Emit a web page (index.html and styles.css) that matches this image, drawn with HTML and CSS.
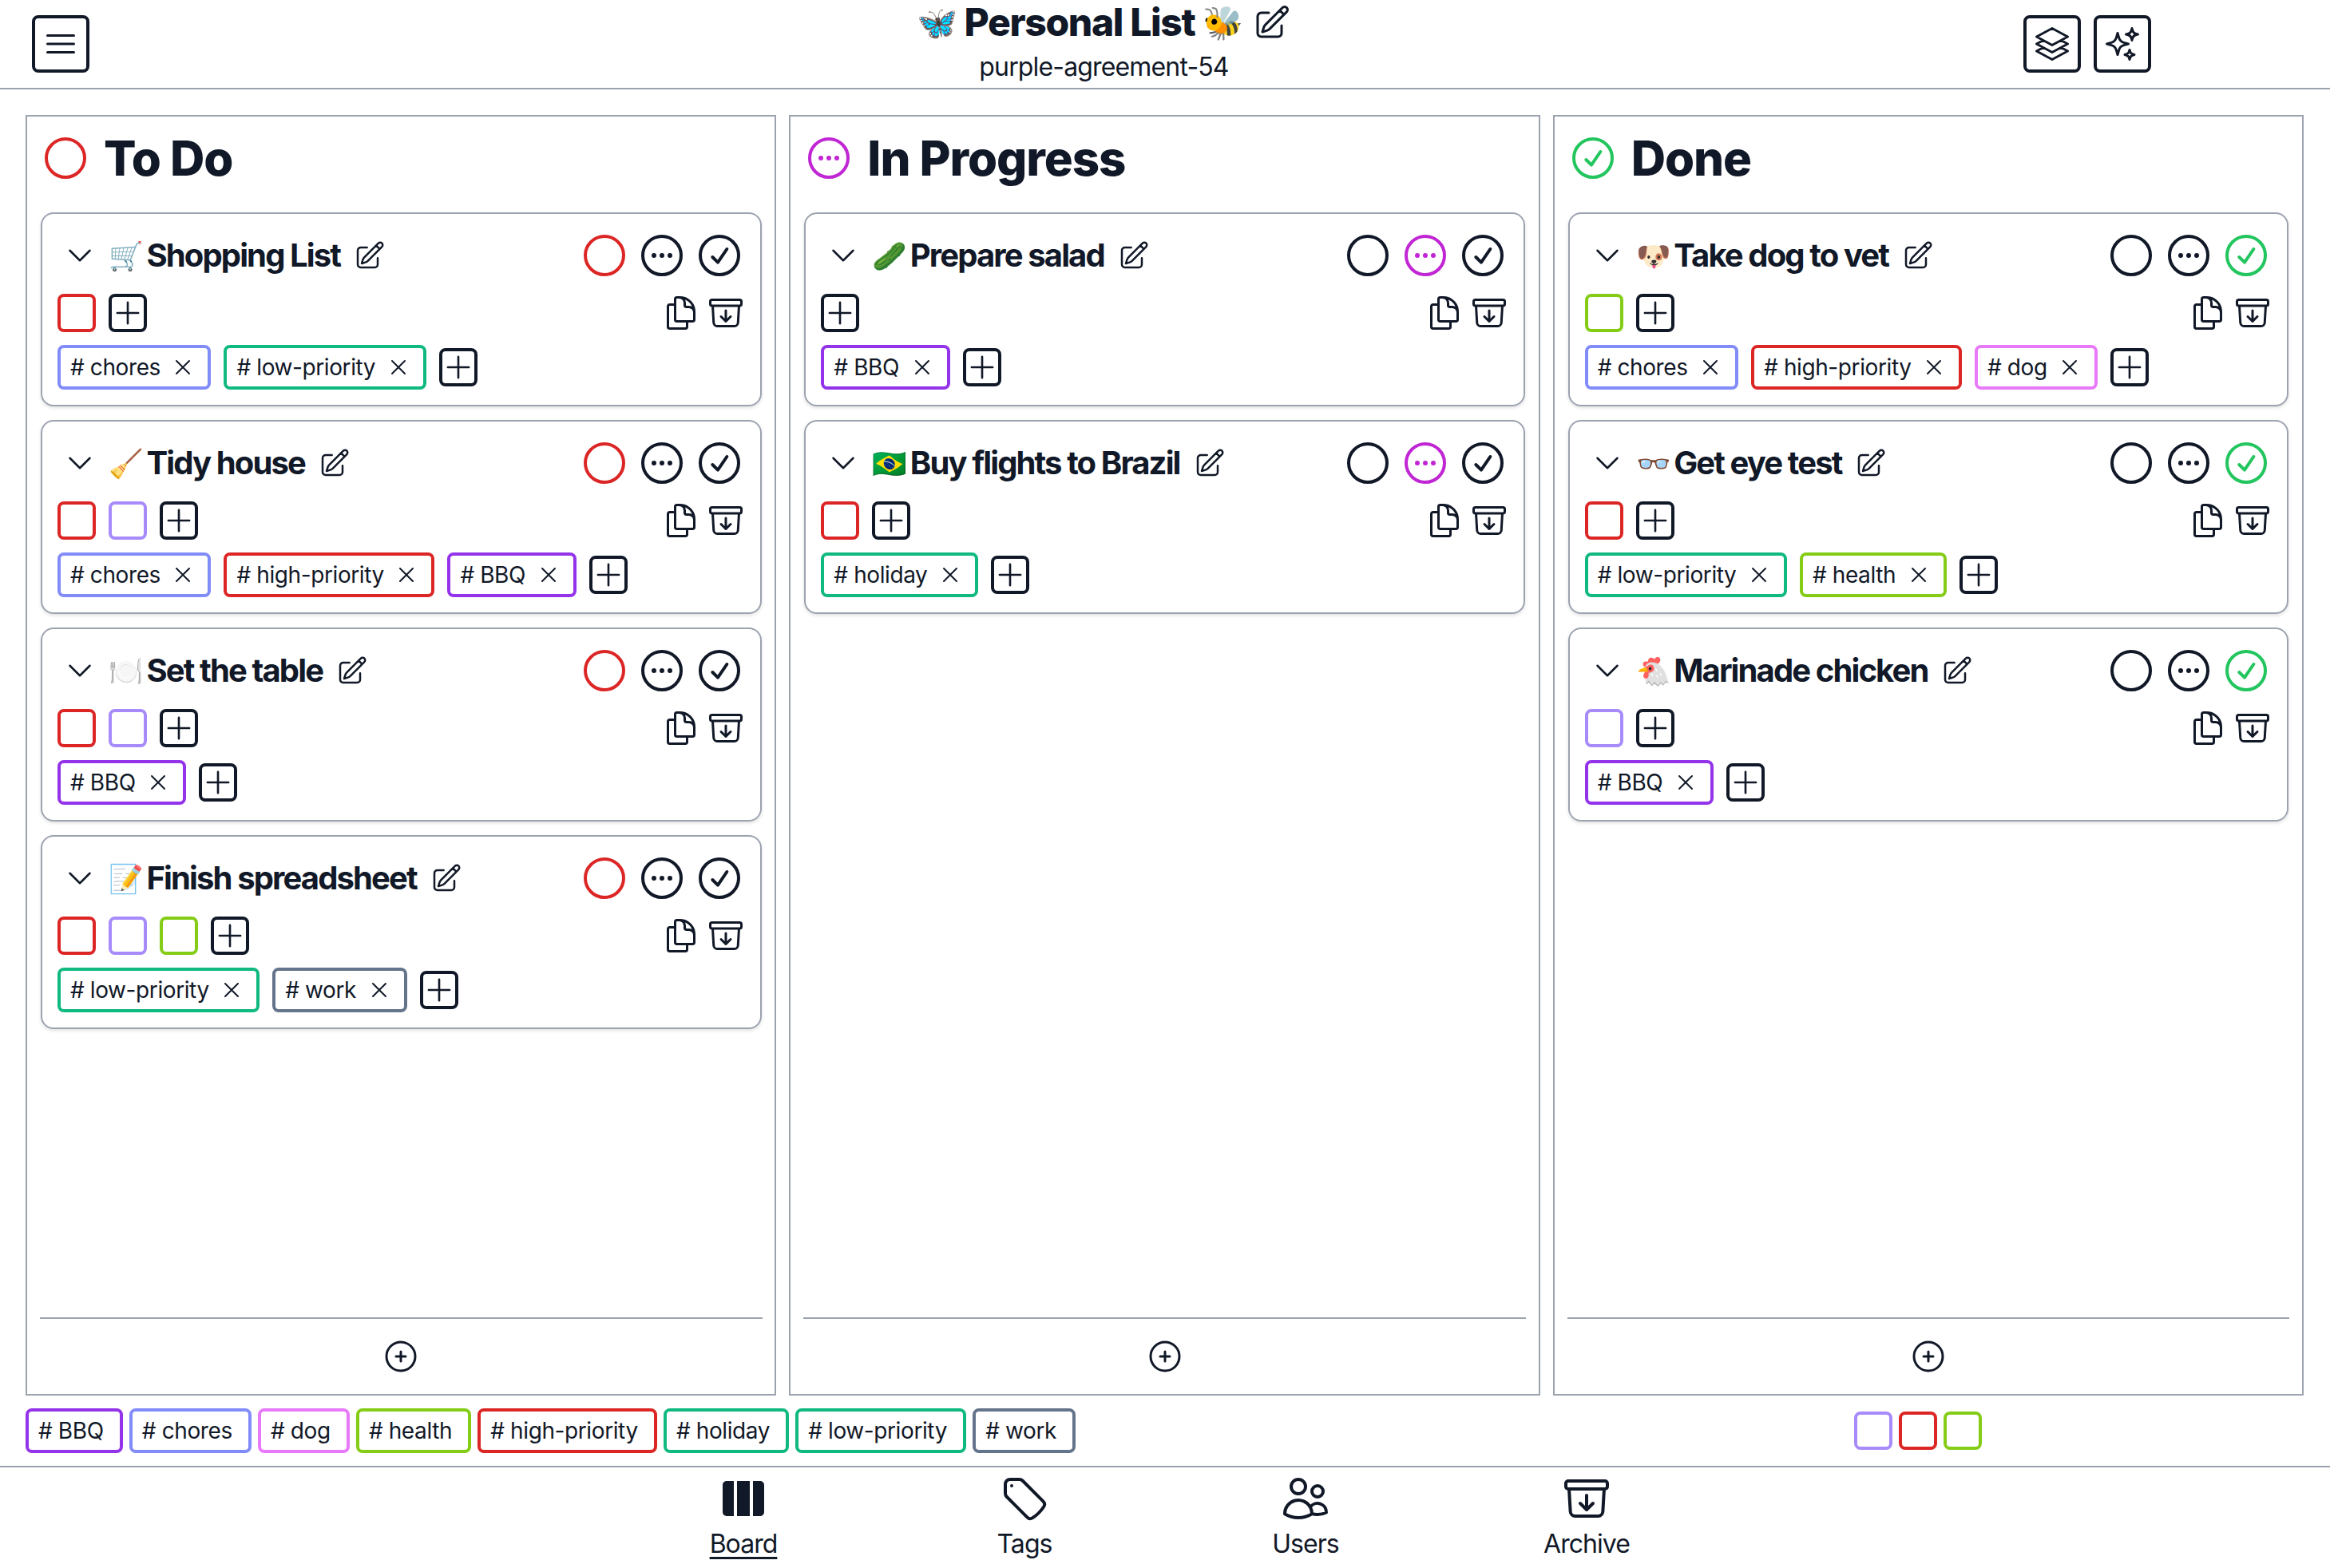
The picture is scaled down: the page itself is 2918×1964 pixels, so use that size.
FILE: index.html
```
<!DOCTYPE html>
<html lang="en"><head><meta charset="utf-8"><title>Personal List</title><link rel="stylesheet" href="styles.css"></head><body>
<svg class="sprite" xmlns="http://www.w3.org/2000/svg">
<symbol id="i-bars" viewBox="0 0 24 24"><path d="M3.75 6.75h16.5M3.75 12h16.5m-16.5 5.25h16.5"/></symbol>
<symbol id="i-pencil" viewBox="0 0 24 24"><path d="m16.862 4.487 1.687-1.688a1.875 1.875 0 1 1 2.652 2.652L10.582 16.07a4.5 4.5 0 0 1-1.897 1.13L6 18l.8-2.685a4.5 4.5 0 0 1 1.13-1.897l8.932-8.931Zm0 0L19.5 7.125M18 14v4.75A2.25 2.25 0 0 1 15.75 21H5.25A2.25 2.25 0 0 1 3 18.75V8.25A2.25 2.25 0 0 1 5.25 6H10"/></symbol>
<symbol id="i-stack" viewBox="0 0 24 24"><path d="M6.429 9.75 2.25 12l4.179 2.25m0-4.5 5.571 3 5.571-3m-11.142 0L2.25 7.5 12 2.25l9.75 5.25-4.179 2.25m0 0L21.75 12l-4.179 2.25m0 0 4.179 2.25L12 21.75 2.25 16.5l4.179-2.25m11.142 0-5.571 3-5.571-3"/></symbol>
<symbol id="i-sparkles" viewBox="0 0 24 24"><path d="M9.813 15.904 9 18.75l-.813-2.846a4.5 4.5 0 0 0-3.09-3.09L2.25 12l2.846-.813a4.5 4.5 0 0 0 3.09-3.09L9 5.25l.813 2.846a4.5 4.5 0 0 0 3.09 3.09L15.75 12l-2.846.813a4.5 4.5 0 0 0-3.09 3.09ZM18.259 8.715 18 9.75l-.259-1.035a3.375 3.375 0 0 0-2.455-2.456L14.25 6l1.036-.259a3.375 3.375 0 0 0 2.455-2.456L18 2.25l.259 1.035a3.375 3.375 0 0 0 2.456 2.456L21.75 6l-1.035.259a3.375 3.375 0 0 0-2.456 2.456ZM16.894 20.567 16.5 21.75l-.394-1.183a2.25 2.25 0 0 0-1.423-1.423L13.5 18.75l1.183-.394a2.25 2.25 0 0 0 1.423-1.423l.394-1.183.394 1.183a2.25 2.25 0 0 0 1.423 1.423l1.183.394-1.183.394a2.25 2.25 0 0 0-1.423 1.423Z"/></symbol>
<symbol id="i-circle" viewBox="0 0 24 24"><path d="M21 12a9 9 0 1 1-18 0 9 9 0 0 1 18 0Z"/></symbol>
<symbol id="i-dots" viewBox="0 0 24 24"><path d="M8.625 12a.375.375 0 1 1-.75 0 .375.375 0 0 1 .75 0Zm0 0H8.25m4.125 0a.375.375 0 1 1-.75 0 .375.375 0 0 1 .75 0Zm0 0H12m4.125 0a.375.375 0 1 1-.75 0 .375.375 0 0 1 .75 0Zm0 0h-.375M21 12a9 9 0 1 1-18 0 9 9 0 0 1 18 0Z"/></symbol>
<symbol id="i-check" viewBox="0 0 24 24"><path d="m8.75 12.75 2.5 2.5 4.25-6.25M21 12a9 9 0 1 1-18 0 9 9 0 0 1 18 0Z"/></symbol>
<symbol id="i-chevron" viewBox="0 0 24 24"><path d="m19.5 8.25-7.5 7.5-7.5-7.5"/></symbol>
<symbol id="i-plus" viewBox="0 0 24 24"><path d="M12 4.5v15m7.5-7.5h-15"/></symbol>
<symbol id="i-x" viewBox="0 0 24 24"><path d="M6 18 18 6M6 6l12 12"/></symbol>
<symbol id="i-copy" viewBox="0 0 24 24"><path d="M15.75 17.25v3.375c0 .621-.504 1.125-1.125 1.125h-9.75a1.125 1.125 0 0 1-1.125-1.125V7.875c0-.621.504-1.125 1.125-1.125H6.75a9.06 9.06 0 0 1 1.5.124m7.5 10.376h3.375c.621 0 1.125-.504 1.125-1.125V11.25c0-4.46-3.243-8.161-7.5-8.876a9.06 9.06 0 0 0-1.5-.124H9.375c-.621 0-1.125.504-1.125 1.125v3.5m7.5 10.375H9.375a1.125 1.125 0 0 1-1.125-1.125v-9.25m12 6.625v-1.875a3.375 3.375 0 0 0-3.375-3.375h-1.5a1.125 1.125 0 0 1-1.125-1.125v-1.5a3.375 3.375 0 0 0-3.375-3.375H9.75"/></symbol>
<symbol id="i-archive" viewBox="0 0 24 24"><path d="m20.25 7.5-.625 10.632a2.25 2.25 0 0 1-2.247 2.118H6.622a2.25 2.25 0 0 1-2.247-2.118L3.75 7.5m8.25 3v6.75m0 0-3-3m3 3 3-3M3.375 7.5h17.25c.621 0 1.125-.504 1.125-1.125v-1.5c0-.621-.504-1.125-1.125-1.125H3.375c-.621 0-1.125.504-1.125 1.125v1.5c0 .621.504 1.125 1.125 1.125Z"/></symbol>
<symbol id="i-plus-circle" viewBox="0 0 24 24"><path d="M12 9v6m3-3H9m12 0a9 9 0 1 1-18 0 9 9 0 0 1 18 0Z"/></symbol>
<symbol id="i-board" viewBox="0 0 24 24"><path class="solid" d="M15 3.75H9v16.5h6V3.75ZM16.5 20.25h3.375c1.035 0 1.875-.84 1.875-1.875V5.625c0-1.036-.84-1.875-1.875-1.875H16.5v16.5ZM4.125 3.75H7.5v16.5H4.125a1.875 1.875 0 0 1-1.875-1.875V5.625c0-1.036.84-1.875 1.875-1.875Z"/></symbol>
<symbol id="i-tag" viewBox="0 0 24 24"><path d="M9.568 3H5.25A2.25 2.25 0 0 0 3 5.25v4.318c0 .597.237 1.17.659 1.591l9.581 9.581c.699.699 1.78.872 2.607.33a18.095 18.095 0 0 0 5.223-5.223c.542-.827.369-1.908-.33-2.607L11.16 3.66A2.25 2.25 0 0 0 9.568 3Z"/><path d="M6 6h.008v.008H6V6Z"/></symbol>
<symbol id="i-users" viewBox="0 0 24 24"><path d="M15 19.128a9.38 9.38 0 0 0 2.625.372 9.337 9.337 0 0 0 4.121-.952 4.125 4.125 0 0 0-7.533-2.493M15 19.128v-.003c0-1.113-.285-2.16-.786-3.07M15 19.128v.106A12.318 12.318 0 0 1 8.624 21c-2.331 0-4.512-.645-6.374-1.766l-.001-.109a6.375 6.375 0 0 1 11.964-3.07M12 6.375a3.375 3.375 0 1 1-6.75 0 3.375 3.375 0 0 1 6.75 0Zm8.25 2.25a2.625 2.625 0 1 1-5.25 0 2.625 2.625 0 0 1 5.25 0Z"/></symbol>
</svg>

<header class="topbar">
  <button class="frame-btn"><svg class="ic48"><use href="#i-bars"/></svg></button>
  <div class="board-id">
    <div class="board-title"><span class="emoji-lg butterfly">🦋</span><h1>Personal List</h1><span class="emoji-lg">🐝</span><svg class="ic48 title-pencil"><use href="#i-pencil"/></svg></div>
    <div class="board-slug">purple-agreement-54</div>
  </div>
  <div class="top-actions">
    <button class="frame-btn"><svg class="ic48"><use href="#i-stack"/></svg></button>
    <button class="frame-btn"><svg class="ic48"><use href="#i-sparkles"/></svg></button>
  </div>
</header>

<main class="columns">
  <section class="column">
    <div class="column-head"><svg class="ic64 c-red"><use href="#i-circle"/></svg><h2>To Do</h2></div>
    <div class="cards">
      <article class="card">
        <div class="card-top"><svg class="ic40 chev"><use href="#i-chevron"/></svg><span class="emoji">🛒</span><h3>Shopping List</h3><svg class="ic40 pencil"><use href="#i-pencil"/></svg>
          <div class="states"><svg class="ic64 c-red"><use href="#i-circle"/></svg><svg class="ic64"><use href="#i-dots"/></svg><svg class="ic64"><use href="#i-check"/></svg></div></div>
        <div class="card-mid"><div class="swatches"><span class="swatch b-red"></span><span class="swatch add"><svg class="ic42"><use href="#i-plus"/></svg></span></div>
          <div class="tools"><svg class="ic48"><use href="#i-copy"/></svg><svg class="ic48"><use href="#i-archive"/></svg></div></div>
        <div class="tags"><span class="tag b-indigo"># chores<svg class="ic32"><use href="#i-x"/></svg></span><span class="tag b-emerald"># low-priority<svg class="ic32"><use href="#i-x"/></svg></span><span class="swatch add"><svg class="ic42"><use href="#i-plus"/></svg></span></div>
      </article>
      <article class="card">
        <div class="card-top"><svg class="ic40 chev"><use href="#i-chevron"/></svg><span class="emoji">🧹</span><h3>Tidy house</h3><svg class="ic40 pencil"><use href="#i-pencil"/></svg>
          <div class="states"><svg class="ic64 c-red"><use href="#i-circle"/></svg><svg class="ic64"><use href="#i-dots"/></svg><svg class="ic64"><use href="#i-check"/></svg></div></div>
        <div class="card-mid"><div class="swatches"><span class="swatch b-red"></span><span class="swatch b-violet"></span><span class="swatch add"><svg class="ic42"><use href="#i-plus"/></svg></span></div>
          <div class="tools"><svg class="ic48"><use href="#i-copy"/></svg><svg class="ic48"><use href="#i-archive"/></svg></div></div>
        <div class="tags"><span class="tag b-indigo"># chores<svg class="ic32"><use href="#i-x"/></svg></span><span class="tag b-red"># high-priority<svg class="ic32"><use href="#i-x"/></svg></span><span class="tag b-purple"># BBQ<svg class="ic32"><use href="#i-x"/></svg></span><span class="swatch add"><svg class="ic42"><use href="#i-plus"/></svg></span></div>
      </article>
      <article class="card">
        <div class="card-top"><svg class="ic40 chev"><use href="#i-chevron"/></svg><span class="emoji">🍽️</span><h3>Set the table</h3><svg class="ic40 pencil"><use href="#i-pencil"/></svg>
          <div class="states"><svg class="ic64 c-red"><use href="#i-circle"/></svg><svg class="ic64"><use href="#i-dots"/></svg><svg class="ic64"><use href="#i-check"/></svg></div></div>
        <div class="card-mid"><div class="swatches"><span class="swatch b-red"></span><span class="swatch b-violet"></span><span class="swatch add"><svg class="ic42"><use href="#i-plus"/></svg></span></div>
          <div class="tools"><svg class="ic48"><use href="#i-copy"/></svg><svg class="ic48"><use href="#i-archive"/></svg></div></div>
        <div class="tags"><span class="tag b-purple"># BBQ<svg class="ic32"><use href="#i-x"/></svg></span><span class="swatch add"><svg class="ic42"><use href="#i-plus"/></svg></span></div>
      </article>
      <article class="card">
        <div class="card-top"><svg class="ic40 chev"><use href="#i-chevron"/></svg><span class="emoji">📝</span><h3>Finish spreadsheet</h3><svg class="ic40 pencil"><use href="#i-pencil"/></svg>
          <div class="states"><svg class="ic64 c-red"><use href="#i-circle"/></svg><svg class="ic64"><use href="#i-dots"/></svg><svg class="ic64"><use href="#i-check"/></svg></div></div>
        <div class="card-mid"><div class="swatches"><span class="swatch b-red"></span><span class="swatch b-violet"></span><span class="swatch b-lime"></span><span class="swatch add"><svg class="ic42"><use href="#i-plus"/></svg></span></div>
          <div class="tools"><svg class="ic48"><use href="#i-copy"/></svg><svg class="ic48"><use href="#i-archive"/></svg></div></div>
        <div class="tags"><span class="tag b-emerald"># low-priority<svg class="ic32"><use href="#i-x"/></svg></span><span class="tag b-slate"># work<svg class="ic32"><use href="#i-x"/></svg></span><span class="swatch add"><svg class="ic42"><use href="#i-plus"/></svg></span></div>
      </article>
    </div>
    <div class="column-foot"><svg class="ic48"><use href="#i-plus-circle"/></svg></div>
  </section>

  <section class="column">
    <div class="column-head"><svg class="ic64 c-fuchsia"><use href="#i-dots"/></svg><h2>In Progress</h2></div>
    <div class="cards">
      <article class="card">
        <div class="card-top"><svg class="ic40 chev"><use href="#i-chevron"/></svg><span class="emoji">🥒</span><h3>Prepare salad</h3><svg class="ic40 pencil"><use href="#i-pencil"/></svg>
          <div class="states"><svg class="ic64"><use href="#i-circle"/></svg><svg class="ic64 c-fuchsia"><use href="#i-dots"/></svg><svg class="ic64"><use href="#i-check"/></svg></div></div>
        <div class="card-mid"><div class="swatches"><span class="swatch add"><svg class="ic42"><use href="#i-plus"/></svg></span></div>
          <div class="tools"><svg class="ic48"><use href="#i-copy"/></svg><svg class="ic48"><use href="#i-archive"/></svg></div></div>
        <div class="tags"><span class="tag b-purple"># BBQ<svg class="ic32"><use href="#i-x"/></svg></span><span class="swatch add"><svg class="ic42"><use href="#i-plus"/></svg></span></div>
      </article>
      <article class="card">
        <div class="card-top"><svg class="ic40 chev"><use href="#i-chevron"/></svg><span class="emoji">🇧🇷</span><h3>Buy flights to Brazil</h3><svg class="ic40 pencil"><use href="#i-pencil"/></svg>
          <div class="states"><svg class="ic64"><use href="#i-circle"/></svg><svg class="ic64 c-fuchsia"><use href="#i-dots"/></svg><svg class="ic64"><use href="#i-check"/></svg></div></div>
        <div class="card-mid"><div class="swatches"><span class="swatch b-red"></span><span class="swatch add"><svg class="ic42"><use href="#i-plus"/></svg></span></div>
          <div class="tools"><svg class="ic48"><use href="#i-copy"/></svg><svg class="ic48"><use href="#i-archive"/></svg></div></div>
        <div class="tags"><span class="tag b-emerald"># holiday<svg class="ic32"><use href="#i-x"/></svg></span><span class="swatch add"><svg class="ic42"><use href="#i-plus"/></svg></span></div>
      </article>
    </div>
    <div class="column-foot"><svg class="ic48"><use href="#i-plus-circle"/></svg></div>
  </section>

  <section class="column">
    <div class="column-head"><svg class="ic64 c-green"><use href="#i-check"/></svg><h2>Done</h2></div>
    <div class="cards">
      <article class="card">
        <div class="card-top"><svg class="ic40 chev"><use href="#i-chevron"/></svg><span class="emoji">🐶</span><h3>Take dog to vet</h3><svg class="ic40 pencil"><use href="#i-pencil"/></svg>
          <div class="states"><svg class="ic64"><use href="#i-circle"/></svg><svg class="ic64"><use href="#i-dots"/></svg><svg class="ic64 c-green"><use href="#i-check"/></svg></div></div>
        <div class="card-mid"><div class="swatches"><span class="swatch b-lime"></span><span class="swatch add"><svg class="ic42"><use href="#i-plus"/></svg></span></div>
          <div class="tools"><svg class="ic48"><use href="#i-copy"/></svg><svg class="ic48"><use href="#i-archive"/></svg></div></div>
        <div class="tags"><span class="tag b-indigo"># chores<svg class="ic32"><use href="#i-x"/></svg></span><span class="tag b-red"># high-priority<svg class="ic32"><use href="#i-x"/></svg></span><span class="tag b-pink"># dog<svg class="ic32"><use href="#i-x"/></svg></span><span class="swatch add"><svg class="ic42"><use href="#i-plus"/></svg></span></div>
      </article>
      <article class="card">
        <div class="card-top"><svg class="ic40 chev"><use href="#i-chevron"/></svg><span class="emoji">👓</span><h3>Get eye test</h3><svg class="ic40 pencil"><use href="#i-pencil"/></svg>
          <div class="states"><svg class="ic64"><use href="#i-circle"/></svg><svg class="ic64"><use href="#i-dots"/></svg><svg class="ic64 c-green"><use href="#i-check"/></svg></div></div>
        <div class="card-mid"><div class="swatches"><span class="swatch b-red"></span><span class="swatch add"><svg class="ic42"><use href="#i-plus"/></svg></span></div>
          <div class="tools"><svg class="ic48"><use href="#i-copy"/></svg><svg class="ic48"><use href="#i-archive"/></svg></div></div>
        <div class="tags"><span class="tag b-emerald"># low-priority<svg class="ic32"><use href="#i-x"/></svg></span><span class="tag b-lime"># health<svg class="ic32"><use href="#i-x"/></svg></span><span class="swatch add"><svg class="ic42"><use href="#i-plus"/></svg></span></div>
      </article>
      <article class="card">
        <div class="card-top"><svg class="ic40 chev"><use href="#i-chevron"/></svg><span class="emoji">🐔</span><h3>Marinade chicken</h3><svg class="ic40 pencil"><use href="#i-pencil"/></svg>
          <div class="states"><svg class="ic64"><use href="#i-circle"/></svg><svg class="ic64"><use href="#i-dots"/></svg><svg class="ic64 c-green"><use href="#i-check"/></svg></div></div>
        <div class="card-mid"><div class="swatches"><span class="swatch b-violet"></span><span class="swatch add"><svg class="ic42"><use href="#i-plus"/></svg></span></div>
          <div class="tools"><svg class="ic48"><use href="#i-copy"/></svg><svg class="ic48"><use href="#i-archive"/></svg></div></div>
        <div class="tags"><span class="tag b-purple"># BBQ<svg class="ic32"><use href="#i-x"/></svg></span><span class="swatch add"><svg class="ic42"><use href="#i-plus"/></svg></span></div>
      </article>
    </div>
    <div class="column-foot"><svg class="ic48"><use href="#i-plus-circle"/></svg></div>
  </section>
</main>

<div class="legend">
  <div class="legend-tags">
    <span class="tag b-purple"># BBQ</span><span class="tag b-indigo"># chores</span><span class="tag b-pink"># dog</span><span class="tag b-lime"># health</span><span class="tag b-red"># high-priority</span><span class="tag b-emerald"># holiday</span><span class="tag b-emerald"># low-priority</span><span class="tag b-slate"># work</span>
  </div>
  <div class="legend-swatches"><span class="swatch b-violet"></span><span class="swatch b-red"></span><span class="swatch b-lime"></span></div>
</div>

<nav class="tabs">
  <a class="tab active"><svg class="ic64"><use href="#i-board"/></svg><span>Board</span></a>
  <a class="tab"><svg class="ic64"><use href="#i-tag"/></svg><span>Tags</span></a>
  <a class="tab"><svg class="ic64"><use href="#i-users"/></svg><span>Users</span></a>
  <a class="tab"><svg class="ic64"><use href="#i-archive"/></svg><span>Archive</span></a>
</nav>
</body></html>
```
FILE: styles.css
```
* { box-sizing: border-box; }
html, body { margin: 0; height: 100%; }
body {
  display: flex;
  flex-direction: column;
  height: 1964px;
  font-family: Inter, "Noto Sans", sans-serif;
  color: #111827;
  letter-spacing: -0.025em;
  background: #fff;
}
h1, h2, h3 { margin: 0; }

.sprite { display: none; }
svg { flex: none; display: block; fill: none; stroke: currentColor; stroke-width: 1.5; stroke-linecap: round; stroke-linejoin: round; }
.solid { fill: currentColor; stroke: none; }
.ic32 { width: 32px; height: 32px; }
.ic40 { width: 40px; height: 40px; }
.ic42 { width: 42px; height: 42px; }
.ic48 { width: 48px; height: 48px; }
.ic64 { width: 64px; height: 64px; }

.c-red { color: #dc2626; }
.c-fuchsia { color: #c026d3; }
.c-green { color: #22c55e; }
.b-red { border-color: #dc2626; }
.b-violet { border-color: #a78bfa; }
.b-lime { border-color: #84cc16; }
.b-indigo { border-color: #818cf8; }
.b-emerald { border-color: #10b981; }
.b-purple { border-color: #9333ea; }
.b-pink { border-color: #e879f9; }
.b-slate { border-color: #64748b; }

.topbar {
  display: flex;
  flex: none;
  height: 112px;
  padding: 19px 224px 0 40px;
  border-bottom: 2px solid #9ca3af;
}
.frame-btn {
  display: flex;
  align-items: center;
  justify-content: center;
  width: 72px;
  height: 72px;
  padding: 0;
  background: #fff;
  color: inherit;
  border: 4px solid #111827;
  border-radius: 8px;
}
.board-id {
  flex: 1;
  margin-top: -15px;
  padding-left: 119px;
  text-align: center;
}
.board-title { display: flex; align-items: center; justify-content: center; height: 48px; }
.board-title h1 { font-size: 48px; line-height: 48px; font-weight: 800; letter-spacing: -0.028em; margin-right: 10px; }
.emoji-lg { width: 56px; font-size: 41px; line-height: 48px; letter-spacing: 0; text-align: left; }
.butterfly { width: 60px; filter: hue-rotate(175deg) saturate(1.5) brightness(1.25); }
.title-pencil { margin-left: 7px; }
.board-slug { margin-top: 8px; font-size: 32px; line-height: 48px; letter-spacing: -0.0265em; }
.top-actions { display: flex; gap: 16px; }

.columns {
  display: grid;
  grid-template-columns: repeat(3, 1fr);
  gap: 16px;
  flex: 1;
  min-height: 0;
  padding: 32px 33px 0 32px;
}
.column {
  display: flex;
  flex-direction: column;
  padding: 0 16.5px 0 17px;
  border: 2px solid #9ca3af;
}
.column-head { display: flex; align-items: center; gap: 16px; height: 64px; margin: 20px 0 36px -1px; }
.column-head h2 { font-size: 60px; line-height: 64px; font-weight: 800; letter-spacing: -0.018em; }
.cards { display: flex; flex-direction: column; gap: 17px; }
.card {
  padding: 20px 19px 19px 19px;
  border: 2px solid #9ca3af;
  border-radius: 16px;
  box-shadow: 0 2px 4px rgba(0, 0, 0, .12);
}
.card-top { display: flex; align-items: center; height: 64px; }
.chev { margin: 0 16px 0 8px; }
.emoji { width: 47.5px; font-size: 35px; line-height: 40px; letter-spacing: 0; text-align: left; }
.card-top h3 { font-size: 40px; line-height: 48px; font-weight: 700; letter-spacing: -0.047em; }
.pencil { margin-left: 17px; }
.states { display: flex; gap: 8px; margin-left: auto; }
.card-mid { display: flex; justify-content: space-between; margin-top: 16px; }
.swatches { display: flex; gap: 16px; }
.tools { display: flex; gap: 8px; }
.swatch {
  display: flex;
  align-items: center;
  justify-content: center;
  flex: none;
  width: 48px;
  height: 48px;
  border-width: 4px;
  border-style: solid;
  border-radius: 8px;
}
.swatch.add { border-color: #111827; }
.tags { display: flex; align-items: center; gap: 16px; margin-top: 16px; }
.tag {
  display: inline-flex;
  align-items: center;
  flex: none;
  height: 56px;
  padding: 0 20px 0 12px;
  border-width: 4px;
  border-style: solid;
  border-radius: 8px;
  font-size: 28px;
  line-height: 40px;
  white-space: nowrap;
}
.tags .tag { padding-right: 15px; }
.tag svg { margin-left: 12.5px; }

.column-foot {
  display: flex;
  justify-content: center;
  margin: auto -1px 0;
  padding: 23px 0 23px;
  border-top: 2px solid #9ca3af;
}

.legend {
  display: flex;
  flex: none;
  align-items: center;
  justify-content: space-between;
  padding: 16px 436px 16px 32px;
}
.legend-tags { display: flex; gap: 8.2px; }
.legend-swatches { display: flex; gap: 8px; }

.tabs {
  display: flex;
  flex: none;
  justify-content: center;
  height: 128px;
  padding-top: 7px;
  border-top: 2px solid #9ca3af;
}
.tab {
  display: flex;
  flex-direction: column;
  align-items: center;
  width: 352px;
  font-size: 32px;
  line-height: 48px;
  letter-spacing: -0.03em;
}
.tab span { margin-top: 1px; }
.tab.active span { text-decoration: underline; text-decoration-thickness: 3px; text-underline-offset: 5px; }
```
